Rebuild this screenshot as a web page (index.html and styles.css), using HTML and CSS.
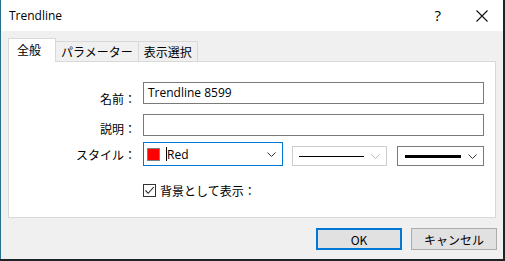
FILE: index.html
```html
<!DOCTYPE html>
<html lang="ja">
<head>
<meta charset="utf-8">
<link rel="stylesheet" href="styles.css">
</head>
<body>
<div class="window">
  <div class="titlebar">
    <span class="title">Trendline</span>
    <span class="help">?</span>
    <span class="close"><svg width="12" height="12" viewBox="0 0 12 12"><path d="M0.5 0.5 L11.5 11.5 M11.5 0.5 L0.5 11.5" stroke="#111" stroke-width="1.1" fill="none"/></svg></span>
  </div>
  <div class="client">
    <div class="tabs">
      <div class="tab active">全般</div>
      <div class="tab">パラメーター</div>
      <div class="tab">表示選択</div>
    </div>
    <div class="panel">
      <div class="form">
        <label class="lbl">名前：</label>
        <div class="input">Trendline 8599</div>
        <label class="lbl">説明：</label>
        <div class="input input-last"></div>
        <label class="lbl">スタイル：</label>
        <div class="style-row">
          <div class="combo combo-color">
            <span class="swatch"></span>
            <span class="caret"></span>
            <span class="combo-text">Red</span>
            <svg class="chev" width="9" height="5" viewBox="0 0 9 5"><path d="M0.5 0.5 L4.5 4.5 L8.5 0.5" stroke="#333" fill="none"/></svg>
          </div>
          <div class="combo combo-disabled">
            <span class="line thin"></span>
            <svg class="chev" width="9" height="5" viewBox="0 0 9 5"><path d="M0.5 0.5 L4.5 4.5 L8.5 0.5" stroke="#bbb" fill="none"/></svg>
          </div>
          <div class="combo combo-width">
            <span class="line thick"></span>
            <svg class="chev" width="9" height="5" viewBox="0 0 9 5"><path d="M0.5 0.5 L4.5 4.5 L8.5 0.5" stroke="#333" fill="none"/></svg>
          </div>
        </div>
        <span></span>
        <div class="check-row">
          <span class="checkbox"><svg width="11" height="11" viewBox="0 0 11 11"><path d="M1.5 5.5 L4.2 8.3 L9.8 2" stroke="#222" stroke-width="1.1" fill="none"/></svg></span>
          <span class="check-label">背景として表示：</span>
        </div>
      </div>
    </div>
    <div class="buttons">
      <button class="btn btn-default">OK</button>
      <button class="btn">キャンセル</button>
    </div>
  </div>
</div>
</body>
</html>
```

FILE: styles.css
```css
html, body {
  margin: 0;
  padding: 0;
}
body {
  width: 505px;
  height: 261px;
  background: #1f2326;
  font-family: "Noto Sans CJK JP", "Noto Sans", sans-serif;
  font-size: 12px;
  color: #000;
  overflow: hidden;
}
.window {
  width: 502px;
  height: 259px;
  border-left: 1px solid #2a6d8c;
  background: #f0f0f0;
  display: flex;
  flex-direction: column;
}
.titlebar {
  height: 31px;
  background: #fff;
  display: flex;
  align-items: center;
  flex: none;
}
.title {
  font-family: "Open Sans", "Noto Sans", sans-serif;
  font-size: 12px;
  margin-left: 8px;
  margin-top: -1px;
  color: #000;
}
.help {
  font-family: "Open Sans", sans-serif;
  font-size: 15px;
  margin-left: auto;
  margin-right: 35px;
  margin-top: -1px;
}
.close {
  display: flex;
  margin-right: 15px;
}
.client {
  flex: 1;
  padding: 8px 7px 0 7px;
  display: flex;
  flex-direction: column;
}
.tabs {
  display: flex;
  align-items: flex-end;
  height: 22px;
  position: relative;
  z-index: 1;
}
.tab {
  height: 19px;
  padding: 0 5px;
  border: 1px solid #d9d9d9;
  border-bottom: none;
  background: #f0f0f0;
  line-height: 19px;
  margin-left: -1px;
}
.tab:first-child { margin-left: 0; }
.tab.active {
  height: 23px;
  line-height: 21px;
  background: #fff;
  padding: 0 14px 0 8px;
  margin-bottom: -1px;
  position: relative;
  z-index: 2;
}
.tab.active + .tab { margin-left: 0; border-left: none; }
.panel {
  height: 155px;
  width: 486px;
  background: #fff;
  border: 1px solid #d9d9d9;
}
.form {
  display: grid;
  grid-template-columns: 127px auto;
  column-gap: 7px;
  padding: 20px 11px 0 0;
  align-items: center;
}
.lbl {
  text-align: right;
}
.input {
  height: 20px;
  border: 1px solid #7a7a7a;
  line-height: 20px;
  padding-left: 4px;
  margin-bottom: 10px;
  font-family: "Open Sans", "Noto Sans", sans-serif;
}
.input-last { margin-bottom: 6px; }
.style-row {
  display: flex;
  align-items: flex-end;
  height: 24px;
  gap: 9px;
}
.combo {
  display: flex;
  align-items: center;
  position: relative;
  box-sizing: border-box;
  background: #fff;
}
.combo-color {
  width: 140px;
  height: 24px;
  border: 1px solid #0078d7;
  padding-left: 3px;
}
.swatch {
  width: 11px;
  height: 11px;
  background: #ff0000;
  border: 1px solid #808080;
  flex: none;
}
.caret {
  width: 1px;
  height: 14px;
  background: #000;
  margin-left: 6px;
}
.combo-text {
  font-family: "Open Sans", "Noto Sans", sans-serif;
}
.chev {
  position: absolute;
  right: 6px;
  top: 50%;
  margin-top: -2px;
}
.combo-disabled {
  width: 95px;
  height: 20px;
  border: 1px solid #cccccc;
}
.combo-width {
  width: 87px;
  height: 20px;
  border: 1px solid #7a7a7a;
  margin-left: 1px;
}
.line {
  display: block;
  background: #000;
  margin-left: 6px;
}
.line.thin {
  width: 65px;
  height: 1px;
}
.line.thick {
  width: 56px;
  height: 3px;
  margin-left: 7px;
}
.check-row {
  display: flex;
  align-items: center;
  margin-top: 16px;
}
.checkbox {
  width: 11px;
  height: 11px;
  border: 1px solid #333;
  display: flex;
  background: #fff;
}
.check-label {
  margin-left: 4px;
}
.buttons {
  display: flex;
  justify-content: flex-end;
  gap: 9px;
  margin-top: 10px;
  margin-right: -1px;
}
.btn {
  width: 86px;
  height: 22px;
  background: #e1e1e1;
  border: 1px solid #adadad;
  font-family: "Noto Sans CJK JP", "Noto Sans", sans-serif;
  font-size: 12px;
  padding: 0;
  color: #000;
}
.btn-default {
  border: 2px solid #0078d7;
}
```
